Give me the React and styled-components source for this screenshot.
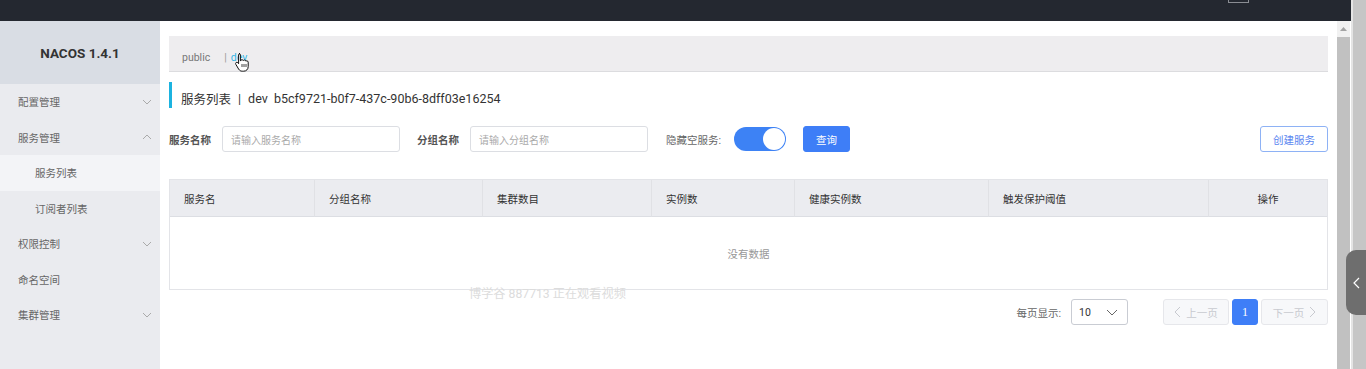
import React from 'react';
import styled, { createGlobalStyle } from 'styled-components';

const GlobalStyle = createGlobalStyle`
  html, body {
    margin: 0;
    padding: 0;
    background: #fff;
  }
  body {
    font-family: Roboto, "Noto Sans CJK SC", sans-serif;
    font-size: 10.5px;
    color: #333;
    overflow: hidden;
  }
`;

const Page = styled.div`
  display: flex;
  width: 1366px;
  height: 369px;
  position: relative;
  overflow: hidden;
`;

const Viewport = styled.div`
  display: flex;
  flex-direction: column;
  width: 1351px;
`;

const TopBar = styled.div`
  height: 21px;
  background: #242830;
  position: relative;
  flex-shrink: 0;
`;

const TopBox = styled.div`
  position: absolute;
  left: 1228px;
  top: -6px;
  width: 19px;
  height: 7px;
  border: 1px solid #8a8d93;
`;

const Body = styled.div`
  display: flex;
  flex: 1;
  min-height: 0;
`;

const Sidebar = styled.aside`
  width: 160px;
  flex-shrink: 0;
  background: #eaebef;
  display: flex;
  flex-direction: column;
`;

const Brand = styled.div`
  height: 63px;
  background: #d9dde4;
  display: flex;
  align-items: center;
  justify-content: center;
  font-size: 13.5px;
  font-weight: 700;
  color: #333;
`;

const MenuItem = styled.div`
  height: 35.5px;
  display: flex;
  align-items: center;
  justify-content: space-between;
  padding: 0 8px 0 ${p => (p.$sub ? 35 : 18)}px;
  color: #666;
  background: ${p => (p.$active ? '#f3f4f7' : 'transparent')};
`;

const Chevron = ({ up }) => (
  <svg width="10" height="6" viewBox="0 0 10 6">
    <path
      d={up ? 'M1 5 L5 1 L9 5' : 'M1 1 L5 5 L9 1'}
      fill="none"
      stroke="#aaa"
      strokeWidth="1"
    />
  </svg>
);

const Main = styled.main`
  flex: 1;
  padding: 15px 9px 0;
  display: flex;
  flex-direction: column;
  position: relative;
`;

const NsBar = styled.div`
  height: 36px;
  background: #eeedef;
  border-bottom: 1px solid #dcdcdf;
  display: flex;
  align-items: flex-end;
  padding: 0 0 7px 13px;
  box-sizing: border-box;
  gap: 14px;
  color: #777;
  position: relative;
`;

const NsLink = styled.span`
  color: ${p => (p.$active ? '#33b5e5' : '#777')};
`;

const Sep = styled.span`
  color: #999;
  margin-right: -10px;
`;

const Title = styled.div`
  margin-top: 10px;
  height: 26px;
  border-left: 3px solid #1cb3e0;
  padding: 7px 0 0 9px;
  box-sizing: border-box;
  display: flex;
  align-items: center;
  font-size: 12.5px;
  color: #333;
  gap: 7px;
`;

const Filters = styled.div`
  display: flex;
  align-items: center;
  margin-top: 18px;
  height: 26px;
`;

const Label = styled.span`
  font-weight: 700;
  color: #555;
  margin-right: 11px;
`;

const Input = styled.div`
  width: 178px;
  height: 26px;
  box-sizing: border-box;
  border: 1px solid #dcdee3;
  border-radius: 3px;
  padding-left: 8px;
  display: flex;
  align-items: center;
  color: #aaa;
  font-size: 10px;
  margin-right: ${p => p.$mr || 0}px;
`;

const Plain = styled.span`
  color: #666;
  margin-right: ${p => p.$mr || 10}px;
`;

const Switch = styled.div`
  width: 52px;
  height: 24px;
  border-radius: 12px;
  background: #3d82f5;
  position: relative;
  margin-right: 17px;
  &::after {
    content: '';
    position: absolute;
    right: 1px;
    top: 1px;
    width: 22px;
    height: 22px;
    border-radius: 50%;
    background: #fff;
  }
`;

const Button = styled.div`
  height: 26px;
  box-sizing: border-box;
  padding: 0 12px;
  display: flex;
  align-items: center;
  border-radius: 3px;
  background: ${p => (p.$ghost ? '#fff' : '#3e7ef7')};
  color: ${p => (p.$ghost ? '#5a86f0' : '#fff')};
  border: 1px solid ${p => (p.$ghost ? '#8eb2f5' : '#3e7ef7')};
  margin-left: ${p => (p.$push ? 'auto' : '0')};
`;

const Table = styled.div`
  margin-top: 27px;
  border: 1px solid #e3e4e8;
  display: grid;
  grid-template-columns: 144px 168px 169px 143px 194px 220px 1fr;
`;

const Th = styled.div`
  height: 36px;
  background: #ebecf0;
  border-bottom: 1px solid #dcdee3;
  border-left: ${p => (p.$first ? 'none' : '1px solid #e0e1e5')};
  display: flex;
  align-items: center;
  justify-content: ${p => (p.$center ? 'center' : 'flex-start')};
  padding-left: ${p => (p.$center ? 0 : 14)}px;
  color: #333;
`;

const Empty = styled.div`
  grid-column: 1 / -1;
  height: 72px;
  display: flex;
  align-items: center;
  justify-content: center;
  color: #999;
`;

const Pager = styled.div`
  display: flex;
  align-items: center;
  justify-content: flex-end;
  margin-top: 9px;
  height: 26px;
`;

const Select = styled.div`
  width: 57px;
  height: 26px;
  box-sizing: border-box;
  border: 1px solid #c9ccd3;
  border-radius: 3px;
  display: flex;
  align-items: center;
  justify-content: space-between;
  padding: 0 9px 0 7px;
  color: #333;
  margin-right: 32px;
`;

const PageBtn = styled.div`
  height: 26px;
  width: ${p => p.$w}px;
  box-sizing: border-box;
  display: flex;
  align-items: center;
  justify-content: center;
  gap: 5px;
  border-radius: 3px;
  background: ${p => (p.$current ? '#3e7ef7' : '#f7f8fa')};
  border: 1px solid ${p => (p.$current ? '#3e7ef7' : '#e6e7eb')};
  color: ${p => (p.$current ? '#fff' : '#c8cad0')};
  font-family: ${p => (p.$current ? '"Liberation Serif", serif' : 'inherit')};
  font-size: ${p => (p.$current ? 12 : 10.5)}px;
  margin-left: 3px;
`;

const Watermark = styled.div`
  position: absolute;
  left: 309px;
  top: 263px;
  font-size: 12.2px;
  color: #dcdcdc;
  pointer-events: none;
`;

const Cursor = styled.svg`
  position: absolute;
  left: 65px;
  top: 16px;
`;

const InnerScroll = styled.div`
  width: 14px;
  flex-shrink: 0;
  background: #f1f1f1;
  display: flex;
  flex-direction: column;
  align-items: center;
  padding-top: 6px;
  box-sizing: border-box;
  border-right: 1px solid #fff;
`;

const Thumb = styled.div`
  margin-top: 6px;
  width: 13px;
  flex: 1;
  background: #c1c1c1;
`;

const OuterScroll = styled.div`
  width: 15px;
  background: #c6c6c6;
  border-left: 2px solid #e4e4e4;
  box-sizing: border-box;
`;

const SideTab = styled.div`
  position: absolute;
  right: 0;
  top: 250px;
  width: 20px;
  height: 65px;
  background: #6e6e6e;
  border-radius: 10px 0 0 10px;
  display: flex;
  align-items: center;
  justify-content: center;
`;

const menu = [
  { label: '配置管理', chevron: 'down' },
  { label: '服务管理', chevron: 'up' },
  { label: '服务列表', sub: true, active: true },
  { label: '订阅者列表', sub: true },
  { label: '权限控制', chevron: 'down' },
  { label: '命名空间' },
  { label: '集群管理', chevron: 'down' },
];

const columns = ['服务名', '分组名称', '集群数目', '实例数', '健康实例数', '触发保护阈值', '操作'];

export default function App() {
  return (
    <Page>
      <GlobalStyle />
      <Viewport>
        <TopBar>
          <TopBox />
        </TopBar>
        <Body>
          <Sidebar>
            <Brand>NACOS 1.4.1</Brand>
            {menu.map(item => (
              <MenuItem key={item.label} $sub={item.sub} $active={item.active}>
                <span>{item.label}</span>
                {item.chevron && <Chevron up={item.chevron === 'up'} />}
              </MenuItem>
            ))}
          </Sidebar>
          <Main>
            <NsBar>
              <NsLink>public</NsLink>
              <Sep>|</Sep>
              <NsLink $active>dev</NsLink>
              <Cursor width="16" height="20" viewBox="0 0 16 20">
                <path
                  d="M5 1.5c.8 0 1.4.6 1.4 1.4v6l.2-.1c.2-.7.8-1.1 1.4-1.1s1.1.4 1.3.9c.3-.4.7-.6 1.2-.6.7 0 1.2.5 1.3 1.1.3-.2.6-.3 1-.3.8 0 1.4.6 1.4 1.4v4.3c0 2.8-1.9 4.7-4.6 4.7H8.3c-1.6 0-2.7-.7-3.6-2L1.8 12.3c-.4-.6-.3-1.4.3-1.8.6-.4 1.3-.3 1.7.2l.8 1V2.9c0-.8.6-1.4 1.4-1.4z"
                  fill="#fff"
                  stroke="#111"
                  strokeWidth="1"
                />
                <path d="M8 12v3M10 12v3M12 12v3" stroke="#111" strokeWidth="0.8" />
              </Cursor>
            </NsBar>
            <Title>
              <span>服务列表</span>
              <span>|</span>
              <span>dev&nbsp;&nbsp;b5cf9721-b0f7-437c-90b6-8dff03e16254</span>
            </Title>
            <Filters>
              <Label>服务名称</Label>
              <Input $mr={17}>请输入服务名称</Input>
              <Label>分组名称</Label>
              <Input $mr={18}>请输入分组名称</Input>
              <Plain $mr={13}>隐藏空服务:</Plain>
              <Switch />
              <Button>查询</Button>
              <Button $ghost $push>创建服务</Button>
            </Filters>
            <Table>
              {columns.map((c, i) => (
                <Th key={c} $first={i === 0} $center={i === columns.length - 1}>
                  {c}
                </Th>
              ))}
              <Empty>没有数据</Empty>
            </Table>
            <Pager>
              <Plain>每页显示:</Plain>
              <Select>
                <span>10</span>
                <svg width="12" height="7" viewBox="0 0 12 7">
                  <path d="M1 1 L6 6 L11 1" fill="none" stroke="#666" strokeWidth="1" />
                </svg>
              </Select>
              <PageBtn $w={66}>
                <svg width="7" height="12" viewBox="0 0 7 12">
                  <path d="M6 1 L1 6 L6 11" fill="none" stroke="#c8cad0" strokeWidth="1" />
                </svg>
                上一页
              </PageBtn>
              <PageBtn $w={26} $current>1</PageBtn>
              <PageBtn $w={67}>
                下一页
                <svg width="7" height="12" viewBox="0 0 7 12">
                  <path d="M1 1 L6 6 L1 11" fill="none" stroke="#c8cad0" strokeWidth="1" />
                </svg>
              </PageBtn>
            </Pager>
            <Watermark>博学谷 887713 正在观看视频</Watermark>
          </Main>
          <InnerScroll>
            <svg width="7" height="4" viewBox="0 0 7 4">
              <path d="M0 4 L3.5 0 L7 4 Z" fill="#a3a3a3" />
            </svg>
            <Thumb />
          </InnerScroll>
        </Body>
      </Viewport>
      <OuterScroll />
      <SideTab>
        <svg width="7" height="12" viewBox="0 0 7 12">
          <path d="M6 1 L1 6 L6 11" fill="none" stroke="#fff" strokeWidth="1.2" />
        </svg>
      </SideTab>
    </Page>
  );
}
